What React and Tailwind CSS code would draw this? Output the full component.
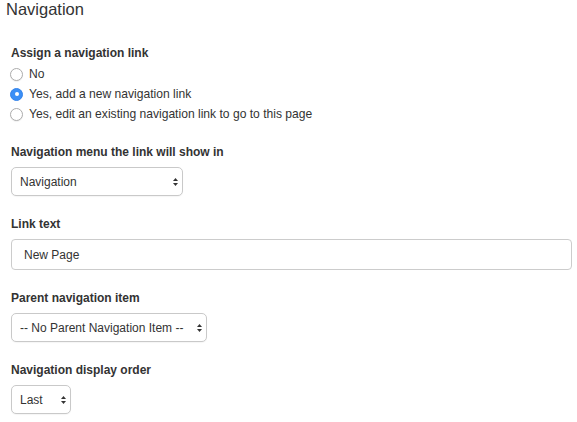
import { useState } from "react";

// Small up/down arrows drawn like the native macOS select control
function SelectArrows() {
  return (
    <svg
      width="5"
      height="8"
      viewBox="0 0 5 8"
      className="pointer-events-none absolute right-[5px] top-1/2 -translate-y-1/2"
    >
      <polygon points="0,3 2.5,0 5,3" fill="#333" />
      <polygon points="0,5 2.5,8 5,5" fill="#333" />
    </svg>
  );
}

function Select({ options, value, width }) {
  return (
    <div className={`relative ${width}`}>
      <select
        defaultValue={value}
        className="block h-[29px] w-full appearance-none rounded-[5px] border border-[#c9c9c9] bg-white pl-[8px] pr-[14px] text-[12px] text-[#333] shadow-[0_1px_1px_rgba(0,0,0,0.04)] outline-none"
      >
        {options.map((o) => (
          <option key={o}>{o}</option>
        ))}
      </select>
      <SelectArrows />
    </div>
  );
}

function Radio({ checked, label, onChange }) {
  return (
    <label className="flex h-[20px] cursor-pointer items-center leading-[20px]" onClick={onChange}>
      {checked ? (
        <span className="-ml-[1px] flex h-[13px] w-[13px] items-center justify-center rounded-full border border-[#3584ea] bg-[#3b8ff6]">
          <span className="h-[4px] w-[4px] rounded-full bg-white" />
        </span>
      ) : (
        <span className="-ml-[1px] h-[13px] w-[13px] rounded-full border border-[#acacac] bg-white shadow-[0_1px_1px_rgba(0,0,0,0.06)]" />
      )}
      <span className="ml-[6px]">{label}</span>
    </label>
  );
}

function FieldLabel({ children }) {
  return <div className="mb-[6px] text-[12px] font-bold leading-[17px]">{children}</div>;
}

export default function App() {
  const [choice, setChoice] = useState("new");

  return (
    <div className="min-h-[422px] w-[577px] bg-white font-['Liberation_Sans',Arial,sans-serif] text-[#333]">
      <h2 className="pl-[6px] text-[16.5px] font-normal leading-[18px] text-[#333]">Navigation</h2>

      <form className="pl-[11px] pr-[5px] pt-[27px] text-[12.1px]">
        <FieldLabel>Assign a navigation link</FieldLabel>
        <div className="-mt-[4px] flex flex-col">
          <Radio checked={choice === "no"} label="No" onChange={() => setChoice("no")} />
          <Radio
            checked={choice === "new"}
            label="Yes, add a new navigation link"
            onChange={() => setChoice("new")}
          />
          <Radio
            checked={choice === "edit"}
            label="Yes, edit an existing navigation link to go to this page"
            onChange={() => setChoice("edit")}
          />
        </div>

        <div className="mt-[20px]">
          <FieldLabel>Navigation menu the link will show in</FieldLabel>
          <Select options={["Navigation"]} value="Navigation" width="w-[172px]" />
        </div>

        <div className="mt-[20px]">
          <FieldLabel>Link text</FieldLabel>
          <input
            type="text"
            defaultValue="New Page"
            className="block h-[31px] w-full rounded-[4px] border border-[#cccccc] bg-white pl-[12px] text-[12px] text-[#333] outline-none"
          />
        </div>

        <div className="mt-[20px]">
          <FieldLabel>Parent navigation item</FieldLabel>
          <Select
            options={["-- No Parent Navigation Item --"]}
            value="-- No Parent Navigation Item --"
            width="w-[196px]"
          />
        </div>

        <div className="mt-[20px]">
          <FieldLabel>Navigation display order</FieldLabel>
          <Select options={["First", "Last"]} value="Last" width="w-[60px]" />
        </div>
      </form>
    </div>
  );
}
